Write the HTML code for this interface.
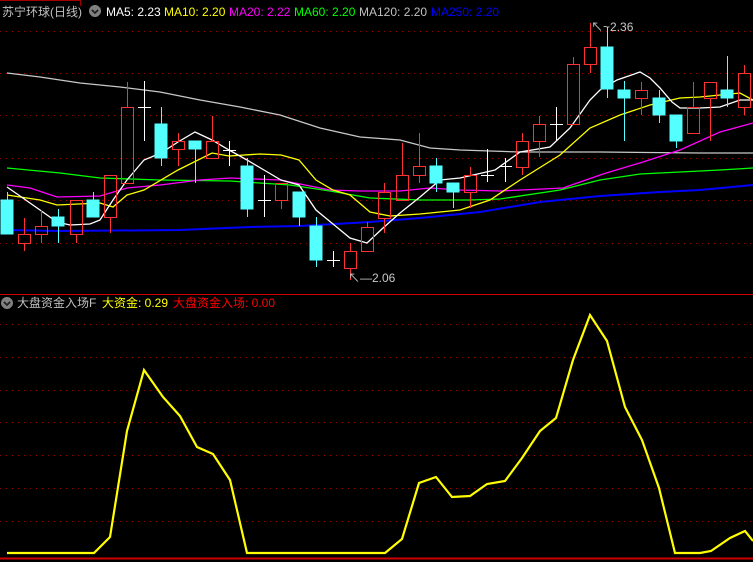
<!DOCTYPE html>
<html><head><meta charset="utf-8"><style>
body{margin:0;background:#000;width:753px;height:562px;overflow:hidden}
svg{display:block}
text{font-family:"Liberation Sans","Noto Sans CJK SC",sans-serif;font-size:12px}
</style></head><body>
<svg width="753" height="562" viewBox="0 0 753 562" xmlns="http://www.w3.org/2000/svg" shape-rendering="crispEdges">
<rect width="753" height="562" fill="#000"/>
<path d="M0,0.5 H80.5 V6" fill="none" stroke="#a00000"/>
<g stroke="#a00000" stroke-dasharray="1 5">
<line x1="0" y1="31.5" x2="753" y2="31.5"/><line x1="0" y1="73.5" x2="753" y2="73.5"/><line x1="0" y1="115.5" x2="753" y2="115.5"/><line x1="0" y1="158.5" x2="753" y2="158.5"/><line x1="0" y1="200.5" x2="753" y2="200.5"/><line x1="0" y1="243.5" x2="753" y2="243.5"/>
<line x1="0" y1="324.5" x2="753" y2="324.5"/><line x1="0" y1="357.5" x2="753" y2="357.5"/><line x1="0" y1="390.5" x2="753" y2="390.5"/><line x1="0" y1="422.5" x2="753" y2="422.5"/><line x1="0" y1="455.5" x2="753" y2="455.5"/><line x1="0" y1="488.5" x2="753" y2="488.5"/><line x1="0" y1="521.5" x2="753" y2="521.5"/>
</g>
<line x1="0" y1="294.5" x2="753" y2="294.5" stroke="#d00000"/>
<line x1="0" y1="558.5" x2="753" y2="558.5" stroke="#d00000" stroke-width="2"/>
<g fill="none" shape-rendering="auto" stroke-width="1.3">
<polyline stroke="#c8c8c8" points="7,73 40,77 80,83 120,87 160,92 200,100 240,107 280,115 320,128 360,137 400,140 430,148 460,150 520,152 600,152 700,153 753,153"/>
<polyline stroke="#0000ff" stroke-width="2" points="7,230 60,231 180,230 250,227 300,226 370,222 420,218 480,212 540,202 600,196 660,192 700,190 753,185"/>
<polyline stroke="#00ff00" points="7,168 60,173 100,178 160,180 230,181 290,185 330,191 370,198 420,200 470,200 500,199 560,190 600,180 640,174 680,172 720,170 753,168"/>
<polyline stroke="#ff00ff" points="7,185 30,188 57,197 100,196 127,188 160,185 200,180 230,178 280,180 330,190 360,191 400,191 430,188 460,190 500,191 563,188 603,174 643,162 680,150 720,132 753,123"/>
<polyline stroke="#ffff00" points="7,195 40,200 57,205 100,203 113,207 127,195 144,190 178,170 212,153 229,156 260,154 281,155 299,160 316,180 333,190 350,195 370,212 390,216 420,214 460,210 490,200 520,180 560,155 590,128 620,115 650,105 680,98 700,97 720,95 740,93 753,100"/>
<polyline stroke="#ffffff" points="7,187 20,196 40,210 57,222 70,225 90,224 100,220 113,200 127,180 144,160 161,153 178,142 195,132 212,140 229,150 247,160 264,170 281,180 299,185 316,210 333,224 350,238 367,243 383,228 400,213 420,197 440,180 460,178 495,170 520,152 550,147 570,128 590,100 600,90 617,80 640,72 650,78 660,88 672,102 680,108 700,108 720,107 740,100 753,100"/>
</g>
<g stroke="#54ffff" fill="#54ffff">
<line x1="7.5" y1="192" x2="7.5" y2="234"/><rect x="1" y="200" width="12" height="34"/>
<line x1="58.5" y1="209" x2="58.5" y2="243"/><rect x="52" y="217" width="12" height="9"/>
<line x1="93.5" y1="192" x2="93.5" y2="217"/><rect x="87" y="200" width="12" height="17"/>
<line x1="161.5" y1="107" x2="161.5" y2="166"/><rect x="155" y="124" width="12" height="34"/>
<line x1="195.5" y1="141" x2="195.5" y2="183"/><rect x="189" y="141" width="12" height="8"/>
<line x1="247.5" y1="158" x2="247.5" y2="217"/><rect x="241" y="166" width="12" height="43"/>
<line x1="299.5" y1="192" x2="299.5" y2="226"/><rect x="293" y="192" width="12" height="25"/>
<line x1="316.5" y1="217" x2="316.5" y2="267"/><rect x="310" y="226" width="12" height="34"/>
<line x1="436.5" y1="158" x2="436.5" y2="192"/><rect x="430" y="166" width="12" height="17"/>
<line x1="453.5" y1="183" x2="453.5" y2="208"/><rect x="447" y="183" width="12" height="9"/>
<line x1="607.5" y1="27" x2="607.5" y2="98"/><rect x="601" y="47" width="12" height="42"/>
<line x1="624.5" y1="81" x2="624.5" y2="141"/><rect x="618" y="90" width="12" height="8"/>
<line x1="659.5" y1="90" x2="659.5" y2="123"/><rect x="653" y="98" width="12" height="17"/>
<line x1="676.5" y1="115" x2="676.5" y2="148"/><rect x="670" y="115" width="12" height="26"/>
<line x1="727.5" y1="56" x2="727.5" y2="107"/><rect x="721" y="90" width="12" height="8"/>
</g>
<g stroke="#ff3232" fill="none">
<path d="M24.5,218V234.5M24.5,243.5V251"/><rect x="18.5" y="234.5" width="12" height="9"/>
<path d="M41.5,210V226.5M41.5,234.5V243"/><rect x="35.5" y="226.5" width="12" height="8"/>
<path d="M76.5,234.5V243"/><rect x="70.5" y="200.5" width="12" height="34"/>
<path d="M110.5,217.5V233"/><rect x="104.5" y="175.5" width="12" height="42"/>
<path d="M127.5,82V107.5"/><rect x="121.5" y="107.5" width="12" height="76"/>
<path d="M178.5,133V141.5M178.5,149.5V166"/><rect x="172.5" y="141.5" width="12" height="8"/>
<path d="M212.5,116V141.5"/><rect x="206.5" y="141.5" width="12" height="17"/>
<path d="M281.5,200.5V209"/><rect x="275.5" y="183.5" width="12" height="17"/>
<path d="M350.5,243V251.5M350.5,268.5V280"/><rect x="344.5" y="251.5" width="12" height="17"/>
<path d="M367.5,222V227.5"/><rect x="361.5" y="227.5" width="12" height="24"/>
<path d="M384.5,183V192.5M384.5,218.5V233"/><rect x="378.5" y="192.5" width="12" height="26"/>
<path d="M402.5,143V175.5"/><rect x="396.5" y="175.5" width="12" height="25"/>
<path d="M419.5,133V166.5M419.5,175.5V183"/><rect x="413.5" y="166.5" width="12" height="9"/>
<path d="M470.5,167V175.5M470.5,192.5V208"/><rect x="464.5" y="175.5" width="12" height="17"/>
<path d="M522.5,133V141.5M522.5,167.5V175"/><rect x="516.5" y="141.5" width="12" height="26"/>
<path d="M539.5,116V124.5M539.5,141.5V157"/><rect x="533.5" y="124.5" width="12" height="17"/>
<path d="M573.5,57V64.5"/><rect x="567.5" y="64.5" width="12" height="60"/>
<path d="M590.5,23V47.5M590.5,64.5V73"/><rect x="584.5" y="47.5" width="12" height="17"/>
<path d="M641.5,82V90.5M641.5,98.5V115"/><rect x="635.5" y="90.5" width="12" height="8"/>
<path d="M693.5,82V107.5"/><rect x="687.5" y="107.5" width="12" height="26"/>
<path d="M710.5,98.5V141"/><rect x="704.5" y="82.5" width="12" height="16"/>
<path d="M744.5,65V73.5M744.5,107.5V115"/><rect x="738.5" y="73.5" width="12" height="34"/>
</g>
<g stroke="#fff">
<line x1="144.5" y1="81" x2="144.5" y2="141"/><line x1="138" y1="107.5" x2="151" y2="107.5"/>
<line x1="229.5" y1="141" x2="229.5" y2="166"/><line x1="223" y1="150.5" x2="236" y2="150.5"/>
<line x1="264.5" y1="175" x2="264.5" y2="217"/><line x1="258" y1="200.5" x2="271" y2="200.5"/>
<line x1="333.5" y1="251" x2="333.5" y2="267"/><line x1="327" y1="260.5" x2="340" y2="260.5"/>
<line x1="487.5" y1="149" x2="487.5" y2="182"/><line x1="481" y1="175.5" x2="494" y2="175.5"/>
<line x1="505.5" y1="158" x2="505.5" y2="182"/><line x1="499" y1="166.5" x2="512" y2="166.5"/>
<line x1="556.5" y1="107" x2="556.5" y2="141"/><line x1="550" y1="124.5" x2="563" y2="124.5"/>
</g>
<text x="591" y="31" fill="#c8c8c8">↖~2.36</text>
<text x="348" y="282" fill="#c8c8c8">↖—2.06</text>
<polyline fill="none" stroke="#ffff00" stroke-width="2.2" shape-rendering="auto" points="7,553 94,553 110,537 127,431 144,370 163,397 180,416 197,447 213,454 230,480 247,553 385,553 402,539 419,483 436,477 452,497 470,496 487,484 505,481 522,458 540,431 556,418 573,360 590,315 607,341 625,407 642,440 659,488 675,553 700,553 711,551 730,538 745,531 753,541"/>
<circle cx="95" cy="11" r="6" fill="#808080"/><path d="M92,10 L95,13 L98,10" stroke="#222" fill="none" stroke-width="1.5"/>
<circle cx="7" cy="303" r="6" fill="#808080"/><path d="M4,302 L7,305 L10,302" stroke="#222" fill="none" stroke-width="1.5"/>
<text x="2" y="16" fill="#c0c0c0" font-size="13">苏宁环球(日线)</text>
<text x="106" y="16" fill="#ffffff">MA5: 2.23</text>
<text x="164" y="16" fill="#ffff00">MA10: 2.20</text>
<text x="229" y="16" fill="#ff00ff">MA20: 2.22</text>
<text x="294" y="16" fill="#00ff00">MA60: 2.20</text>
<text x="359" y="16" fill="#c0c0c0">MA120: 2.20</text>
<text x="431" y="16" fill="#0000ff">MA250: 2.20</text>
<text x="17" y="307" fill="#c0c0c0">大盘资金入场F</text>
<text x="102" y="307" fill="#ffff00">大资金: 0.29</text>
<text x="173" y="307" fill="#ff0000">大盘资金入场: 0.00</text>
</svg>
</body></html>
